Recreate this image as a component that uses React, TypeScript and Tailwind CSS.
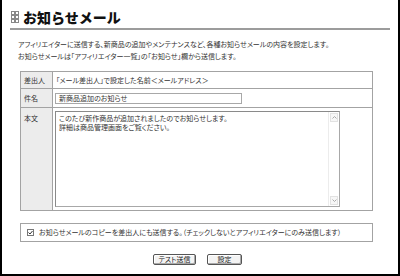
function GridIcon() {
  return (
    <svg width="8" height="12" viewBox="0 0 8 12" className="shrink-0">
      {[0, 4, 8].map((y) =>
        [0, 4].map((x) => (
          <rect
            key={`${x}-${y}`}
            x={x + 0.5}
            y={y + 0.5}
            width="3"
            height="3"
            fill="none"
            stroke="#888"
            strokeWidth="1"
          />
        ))
      )}
    </svg>
  );
}

function FakeScrollbar() {
  return (
    <div className="w-[11px] shrink-0 flex flex-col justify-between border-l border-[#ececec] bg-white">
      <div className="h-[9px] m-[1px] flex items-center justify-center border border-[#e2e2e2] bg-[#f7f7f7]">
        <svg width="5" height="3" viewBox="0 0 5 3">
          <path d="M0.5 2.5 L2.5 0.5 L4.5 2.5" fill="none" stroke="#aaa" strokeWidth="1" />
        </svg>
      </div>
      <div className="h-[9px] m-[1px] flex items-center justify-center border border-[#e2e2e2] bg-[#f7f7f7]">
        <svg width="5" height="3" viewBox="0 0 5 3">
          <path d="M0.5 0.5 L2.5 2.5 L4.5 0.5" fill="none" stroke="#aaa" strokeWidth="1" />
        </svg>
      </div>
    </div>
  );
}

function Button({ label, width }: { label: string; width: string }) {
  return (
    <button
      className={`${width} h-[11px] flex items-center justify-center border border-[#555] rounded-[2px] bg-[#f3f3f3] text-[7px] leading-none text-[#222] shadow-[inset_-1px_-1px_0_#aaa,inset_1px_1px_0_#fff]`}
    >
      {label}
    </button>
  );
}

export default function App() {
  return (
    <div
      className="w-[400px] h-[276px] box-border border-l-2 border-r-2 border-b-2 border-black bg-white text-[#333] [font-feature-settings:'palt']"
      style={{ fontFamily: '"Noto Sans CJK JP", "Noto Sans", sans-serif' }}
    >
      {/* header */}
      <div className="pt-[9px] pl-[9px] flex items-center gap-[4px] h-[25px]">
        <GridIcon />
        <h1 className="text-[14px] leading-[16px] font-black text-[#111] [font-feature-settings:normal]">
          お知らせメール
        </h1>
      </div>
      <div className="ml-[8px] w-[380px] mt-[3px] h-[2px] bg-[#9c9c9c]" />

      {/* description */}
      <div className="mt-[8px] pl-[16px] text-[7px] leading-[12px]">
        <p>アフィリエイターに送信する、新商品の追加やメンテナンスなど、各種お知らせメールの内容を設定します。</p>
        <p>お知らせメールは「アフィリエイター一覧」の「お知らせ」欄から送信します。</p>
      </div>

      {/* form table */}
      <div className="mt-[9px] ml-[18px] w-[353px] border border-[#a3a3a3] text-[7px] leading-[9px]">
        <div className="flex h-[17px] border-b border-[#a3a3a3]">
          <div className="w-[32px] shrink-0 bg-[#ececec] border-r border-[#a3a3a3] flex items-center pl-[3px]">
            差出人
          </div>
          <div className="flex items-center pl-[3px]">「メール差出人」で設定した名前＜メールアドレス＞</div>
        </div>
        <div className="flex h-[19px] border-b border-[#a3a3a3]">
          <div className="w-[32px] shrink-0 bg-[#ececec] border-r border-[#a3a3a3] flex items-center pl-[3px]">
            件名
          </div>
          <div className="flex items-center pl-[2px]">
            <div className="w-[187px] h-[11px] border border-[#a8a8a8] flex items-center pl-[3px] bg-white">
              新商品追加のお知らせ
            </div>
          </div>
        </div>
        <div className="flex h-[102px]">
          <div className="w-[32px] shrink-0 bg-[#ececec] border-r border-[#a3a3a3] pl-[3px] pt-[6px]">
            本文
          </div>
          <div className="pl-[2px] pt-[3px]">
            <div className="w-[285px] h-[96px] flex border border-[#a8a8a8] border-t-[#8a8a8a] border-l-[#8a8a8a] bg-white">
              <div className="flex-1 pl-[3px] pt-[2px] leading-[8.5px]">
                <p>このたび新作商品が追加されましたのでお知らせします。</p>
                <p>詳細は商品管理画面をご覧ください。</p>
              </div>
              <FakeScrollbar />
            </div>
          </div>
        </div>
      </div>

      {/* checkbox */}
      <div className="mt-[12px] ml-[18px] w-[353px] h-[19px] border border-[#a3a3a3] flex items-center pl-[6px] gap-[5px] text-[7px]">
        <svg width="7" height="7" viewBox="0 0 7 7" className="shrink-0">
          <rect x="0.5" y="0.5" width="6" height="6" fill="#fff" stroke="#777" />
          <path d="M1.5 3.5 L3 5 L5.5 2" fill="none" stroke="#333" strokeWidth="1" />
        </svg>
        <span>お知らせメールのコピーを差出人にも送信する。（チェックしないとアフィリエイターにのみ送信します）</span>
      </div>

      {/* buttons */}
      <div className="mt-[12px] flex gap-[11px] pl-[151px]">
        <Button label="テスト送信" width="w-[43px]" />
        <Button label="設定" width="w-[35px]" />
      </div>
    </div>
  );
}
